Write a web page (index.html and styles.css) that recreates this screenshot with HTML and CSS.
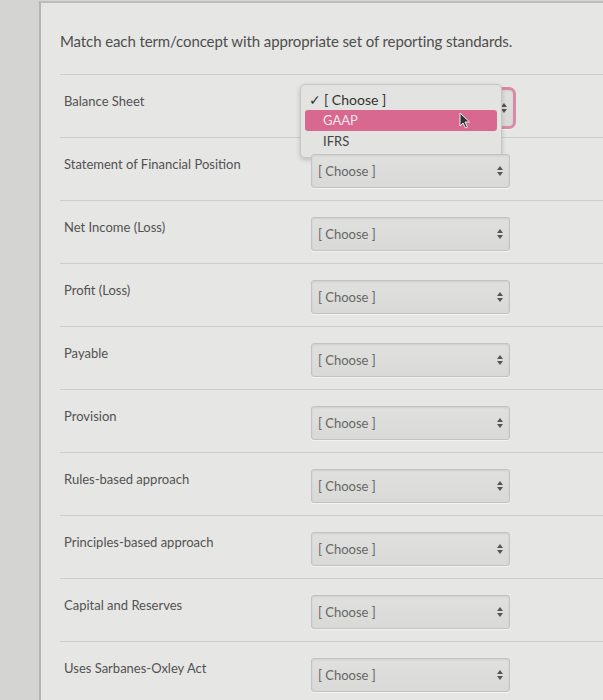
FILE: index.html
```html
<!DOCTYPE html>
<html>
<head>
<meta charset="utf-8">
<link rel="stylesheet" href="styles.css">
</head>
<body>
<div class="screen">
  <div class="gutter"></div>
  <div class="panel">
    <p class="title">Match each term/concept with appropriate set of reporting standards.</p>
    <div class="rows">
      <div class="row">
        <div class="label">Balance Sheet</div>
        <div class="cell">
          <div class="select focused"><span class="arrows"><svg width="6" height="10" viewBox="0 0 6 10"><path d="M3 0 L6 4 L0 4 Z M0 6 L6 6 L3 10 Z" fill="#555"/></svg></span></div>
          <div class="menu">
            <div class="opt first"><span class="check">✓</span>[ Choose ]</div>
            <div class="opt active">GAAP
              <svg class="cursor" width="12" height="17" viewBox="0 0 12 17"><path d="M1 1 L1 14 L4 11 L6.5 16 L8.5 15 L6 10 L10.5 10 Z" fill="#333" stroke="#eee" stroke-width="1"/></svg>
            </div>
            <div class="opt">IFRS</div>
          </div>
        </div>
      </div>
      <div class="row">
        <div class="label">Statement of Financial Position</div>
        <div class="cell"><div class="select"><span class="txt">[ Choose ]</span><span class="arrows"><svg width="6" height="10" viewBox="0 0 6 10"><path d="M3 0 L6 4 L0 4 Z M0 6 L6 6 L3 10 Z" fill="#555"/></svg></span></div></div>
      </div>
      <div class="row">
        <div class="label">Net Income (Loss)</div>
        <div class="cell"><div class="select"><span class="txt">[ Choose ]</span><span class="arrows"><svg width="6" height="10" viewBox="0 0 6 10"><path d="M3 0 L6 4 L0 4 Z M0 6 L6 6 L3 10 Z" fill="#555"/></svg></span></div></div>
      </div>
      <div class="row">
        <div class="label">Profit (Loss)</div>
        <div class="cell"><div class="select"><span class="txt">[ Choose ]</span><span class="arrows"><svg width="6" height="10" viewBox="0 0 6 10"><path d="M3 0 L6 4 L0 4 Z M0 6 L6 6 L3 10 Z" fill="#555"/></svg></span></div></div>
      </div>
      <div class="row">
        <div class="label">Payable</div>
        <div class="cell"><div class="select"><span class="txt">[ Choose ]</span><span class="arrows"><svg width="6" height="10" viewBox="0 0 6 10"><path d="M3 0 L6 4 L0 4 Z M0 6 L6 6 L3 10 Z" fill="#555"/></svg></span></div></div>
      </div>
      <div class="row">
        <div class="label">Provision</div>
        <div class="cell"><div class="select"><span class="txt">[ Choose ]</span><span class="arrows"><svg width="6" height="10" viewBox="0 0 6 10"><path d="M3 0 L6 4 L0 4 Z M0 6 L6 6 L3 10 Z" fill="#555"/></svg></span></div></div>
      </div>
      <div class="row">
        <div class="label">Rules-based approach</div>
        <div class="cell"><div class="select"><span class="txt">[ Choose ]</span><span class="arrows"><svg width="6" height="10" viewBox="0 0 6 10"><path d="M3 0 L6 4 L0 4 Z M0 6 L6 6 L3 10 Z" fill="#555"/></svg></span></div></div>
      </div>
      <div class="row">
        <div class="label">Principles-based approach</div>
        <div class="cell"><div class="select"><span class="txt">[ Choose ]</span><span class="arrows"><svg width="6" height="10" viewBox="0 0 6 10"><path d="M3 0 L6 4 L0 4 Z M0 6 L6 6 L3 10 Z" fill="#555"/></svg></span></div></div>
      </div>
      <div class="row">
        <div class="label">Capital and Reserves</div>
        <div class="cell"><div class="select"><span class="txt">[ Choose ]</span><span class="arrows"><svg width="6" height="10" viewBox="0 0 6 10"><path d="M3 0 L6 4 L0 4 Z M0 6 L6 6 L3 10 Z" fill="#555"/></svg></span></div></div>
      </div>
      <div class="row">
        <div class="label">Uses Sarbanes-Oxley Act</div>
        <div class="cell"><div class="select"><span class="txt">[ Choose ]</span><span class="arrows"><svg width="6" height="10" viewBox="0 0 6 10"><path d="M3 0 L6 4 L0 4 Z M0 6 L6 6 L3 10 Z" fill="#555"/></svg></span></div></div>
      </div>
    </div>
  </div>
</div>
</body>
</html>
```

FILE: styles.css
```css
html, body {
  margin: 0;
  padding: 0;
  height: 700px;
  overflow: hidden;
}
body {
  background: #d5d5d3;
  font-family: Lato, "Open Sans", sans-serif;
  color: #555;
}
.screen {
  display: flex;
  height: 700px;
}
.gutter {
  width: 39px;
  flex: none;
  background: #d4d4d2;
}
.panel {
  flex: 1;
  background: #e6e6e4;
  border-left: 2px solid #b4b4b2;
  border-top: 2px solid #bdbdbb;
  padding-left: 19px;
  margin-top: 1px;
}
.title {
  margin: 27px 0 0 0;
  font-size: 15px;
  line-height: 22px;
  color: #4e4e4e;
  letter-spacing: -0.1px;
}
.rows {
  margin-top: 22px;
}
.row {
  height: 62px;
  border-top: 1px solid #cdcdcb;
  display: grid;
  grid-template-columns: 247px 200px;
  padding-left: 4px;
}
.label {
  font-size: 13px;
  line-height: 18px;
  padding-top: 17px;
  color: #525252;
}
.cell {
  position: relative;
  padding-top: 16px;
}
.select {
  height: 34px;
  width: 199px;
  box-sizing: border-box;
  border: 1px solid #c3c3c1;
  border-radius: 3px;
  background: linear-gradient(#e0e0de, #d9d9d7);
  box-shadow: inset 0 1px 2px rgba(0,0,0,0.08), 0 1px 0 rgba(255,255,255,0.5);
  display: flex;
  align-items: center;
  justify-content: space-between;
  padding: 0 6px 0 6px;
  font-size: 13px;
  color: #666;
}
.arrows {
  display: flex;
  align-items: center;
}
.select.focused {
  width: 211px;
  height: 42px;
  margin-left: -6px;
  margin-top: -4px;
  border: 3px solid #d98aa6;
  border-radius: 7px;
  justify-content: flex-end;
  padding-right: 6px;
}
.menu {
  position: absolute;
  left: -11px;
  top: 9px;
  width: 202px;
  height: 74px;
  box-sizing: border-box;
  background: #e3e3e1;
  border: 1px solid #c6c6c4;
  border-radius: 5px;
  box-shadow: 0 2px 5px rgba(0,0,0,0.18);
  padding: 4px 4px;
  font-size: 13px;
  color: #444;
}
.opt {
  position: relative;
  height: 21px;
  line-height: 21px;
  padding-left: 18px;
  border-radius: 3px;
}
.opt.first {
  padding-left: 4px;
  font-size: 14px;
  color: #333;
}
.check {
  margin-right: 3px;
}
.opt.active {
  background: #d8688f;
  color: #f6e6ec;
}
.cursor {
  position: absolute;
  left: 154px;
  top: 2px;
}
```
